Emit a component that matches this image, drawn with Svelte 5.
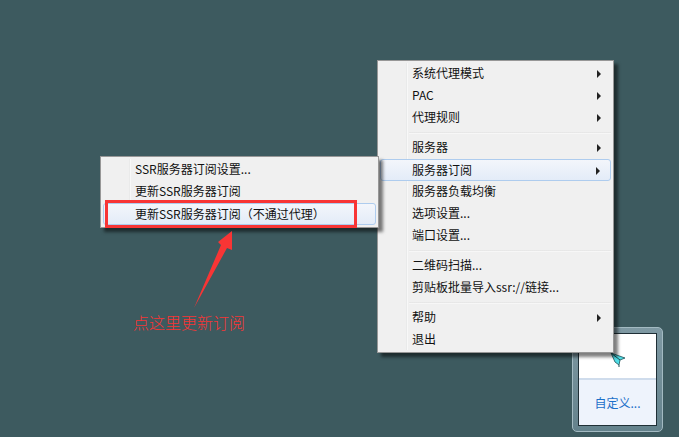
<script>
  const main = [
    [{ t: '系统代理模式', a: 1 }, { t: 'PAC', a: 1 }, { t: '代理规则', a: 1 }],
    [{ t: '服务器', a: 1 }, { t: '服务器订阅', a: 1, h: 1 }, { t: '服务器负载均衡' }, { t: '选项设置...' }, { t: '端口设置...' }],
    [{ t: '二维码扫描...' }, { t: '剪贴板批量导入ssr://链接...' }],
    [{ t: '帮助', a: 1 }, { t: '退出' }]
  ];
  const sub = [{ t: 'SSR服务器订阅设置...' }, { t: '更新SSR服务器订阅' }, { t: '更新SSR服务器订阅（不通过代理）', h: 1 }];
</script>

{#snippet row(item)}
  <div class="row" class:hover={item.h}>
    <span class="label">{item.t}</span>
    {#if item.a}<span class="arrow"></span>{/if}
  </div>
{/snippet}

<div class="desk">
  <div class="flyout">
    <div class="pane">
      <div class="icons"></div>
      <div class="custom">自定义...</div>
    </div>
    <svg class="plane" width="16" height="15" viewBox="0 0 16 15">
      <path d="M1 1 L15 6 L10 8 L9 13 L5 10 Z" fill="#4fdde6" stroke="#1d4f55" stroke-width="0.8"/>
      <path d="M1 1 L10 8 M9 13 L9 15" stroke="#1d4f55" stroke-width="1" fill="none"/>
    </svg>
  </div>

  <div class="menu mainmenu">
    {#each main as group, i}
      {#if i > 0}<div class="sep"></div>{/if}
      {#each group as item}{@render row(item)}{/each}
    {/each}
  </div>

  <div class="menu submenu">
    {#each sub as item}{@render row(item)}{/each}
  </div>

  <div class="redbox"></div>
  <svg class="pointer" width="40" height="78" viewBox="0 0 40 78">
    <path d="M2 77 L29 14 L26 11 L40 0 L40 19 L35 17 Z" fill="#f83535"/>
  </svg>
  <div class="note">点这里更新订阅</div>
</div>

<style>
  :global(body) { margin: 0; }
  .desk {
    position: relative;
    width: 679px;
    height: 437px;
    overflow: hidden;
    background: #3d5a5f;
    font-family: "Noto Sans CJK SC", "Noto Sans", sans-serif;
    font-size: 12px;
    color: #111;
  }
  .menu {
    position: absolute;
    box-sizing: border-box;
    background: #f0f0f0;
    border: 1px solid #979797;
    padding: 2px;
    box-shadow: 4px 4px 3px rgba(0, 0, 0, 0.5);
  }
  .menu::before {
    content: "";
    position: absolute;
    top: 2px;
    bottom: 2px;
    width: 2px;
    background: linear-gradient(to right, #e2e3e3, #fff);
  }
  .mainmenu { left: 377px; top: 60px; width: 237px; height: 293px; }
  .mainmenu::before { left: 28px; }
  .submenu { left: 100px; top: 156px; width: 279px; height: 72px; }
  .submenu::before { left: 28px; }
  .row {
    position: relative;
    box-sizing: border-box;
    height: 22px;
    padding-left: 32px;
    padding-bottom: 2px;
    display: flex;
    align-items: center;
    justify-content: space-between;
    line-height: 20px;
    white-space: nowrap;
  }
  .row.hover {
    border: 1px solid #aeccee;
    border-radius: 3px;
    background: linear-gradient(to bottom, #f3f6fb, #e3ecf8);
    padding-left: 31px;
    padding-bottom: 1px;
  }
  .arrow {
    width: 0;
    height: 0;
    margin-right: 10px;
    margin-top: 2px;
    border-left: 4px solid #222;
    border-top: 4px solid transparent;
    border-bottom: 4px solid transparent;
  }
  .sep {
    height: 2px;
    margin: 3px 0 3px 29px;
    background: linear-gradient(to bottom, #e0e0e0, #fff);
  }
  .flyout {
    position: absolute;
    left: 572px;
    top: 327px;
    width: 91px;
    height: 105px;
    box-sizing: border-box;
    padding: 5px;
    border: 1px solid #a3bac2;
    border-radius: 5px;
    background: linear-gradient(to bottom, #7f99a3, #64828c);
  }
  .pane {
    box-sizing: border-box;
    height: 100%;
    border: 1px solid #1f2f36;
    background: #fff;
    display: flex;
    flex-direction: column;
  }
  .icons {
    height: 46px;
    box-sizing: border-box;
    border-bottom: 2px solid #cfdcec;
  }
  .plane {
    position: absolute;
    left: 37px;
    top: 24px;
  }
  .custom {
    flex: 1;
    background: #eef3fc;
    color: #1a6fc9;
    display: flex;
    align-items: center;
    justify-content: center;
  }
  .redbox {
    position: absolute;
    left: 105px;
    top: 200px;
    width: 252px;
    height: 28px;
    box-sizing: border-box;
    border: 3px solid #f83535;
  }
  .pointer {
    position: absolute;
    left: 192px;
    top: 231px;
  }
  .note {
    position: absolute;
    left: 133px;
    top: 311px;
    font-size: 16px;
    line-height: 22px;
    color: #f83535;
    font-weight: 300;
  }
</style>
